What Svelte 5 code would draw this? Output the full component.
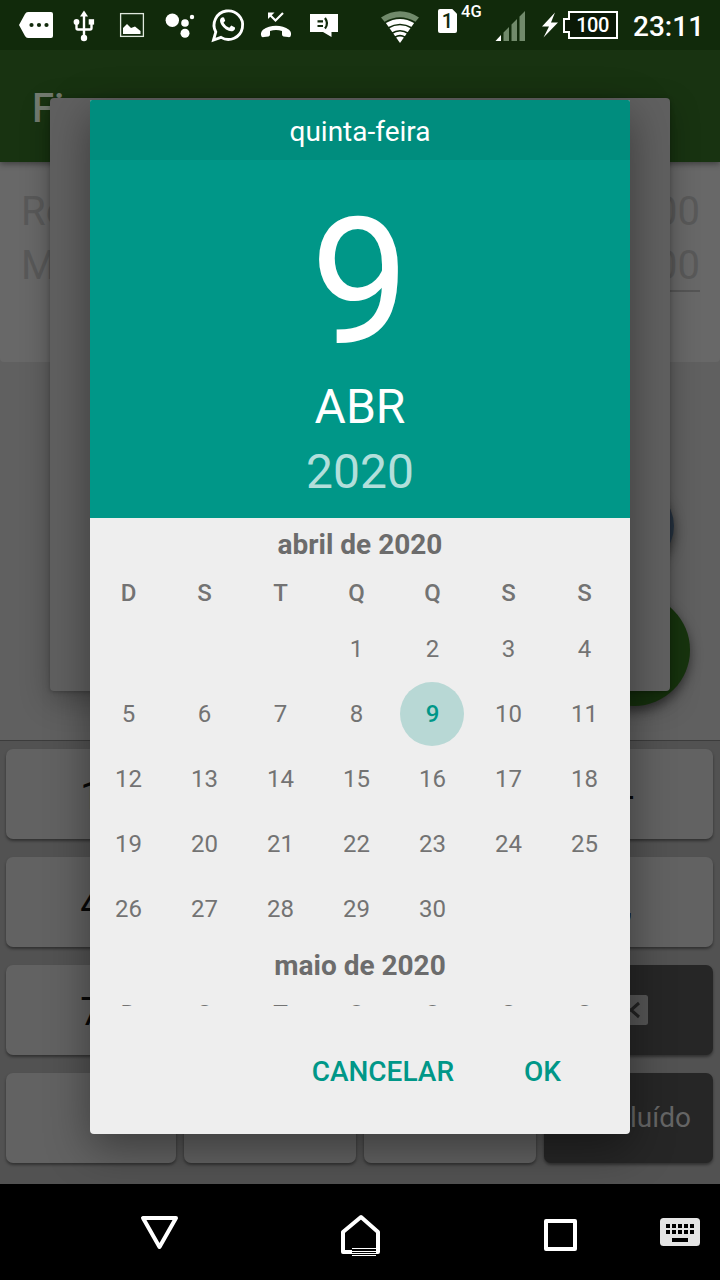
<script>
  const weekdays = ['D', 'S', 'T', 'Q', 'Q', 'S', 'S'];
  const days = [null, null, null, ...Array.from({ length: 30 }, (_, i) => i + 1)];
  const selected = 9;
  const keys = ['1', '', '', '-', '4', '', '', ',', '7', '', '', 'del', '', '', '', 'done'];
</script>

<div class="screen">
  <header class="status">
    <svg width="64" height="50" viewBox="0 0 64 50"><path d="M28 12H51Q53 12 53 14V36Q53 38 51 38H28Q26 38 25 36L19 25L25 14Q26 12 28 12Z" fill="#fff"/><g fill="#112a0b"><circle cx="31.500" cy="25" r="2.100"/><circle cx="39" cy="25" r="2.100"/><circle cx="46.500" cy="25" r="2.100"/></g></svg>
    <svg width="44" height="50" viewBox="64 0 44 50"><path d="M84 14V37M76.500 23V28Q76.500 29.500 78 29.500H90Q91.500 29.500 91.500 28V23" fill="none" stroke="#fff" stroke-width="2.400"/><g fill="#fff"><path d="M84 10.500L88 16.500H80Z"/><circle cx="76.500" cy="22" r="2.900"/><rect x="88.700" y="19.200" width="5.400" height="5.400"/><circle cx="84" cy="38" r="3.200"/></g></svg>
    <svg width="46" height="50" viewBox="108 0 46 50"><rect x="120.600" y="13.600" width="22.800" height="22.800" fill="none" stroke="#dfe8dd" stroke-width="1.300"/><path d="M123 34V28L127 24L131 28L135 26.500L140.500 31V34Z" fill="#fff"/></svg>
    <svg width="52" height="50" viewBox="154 0 52 50" fill="#fff"><circle cx="172.300" cy="20.300" r="6.700"/><circle cx="185" cy="23" r="3.800"/><circle cx="192" cy="17" r="2.200"/><circle cx="185" cy="33.200" r="4.500"/></svg>
    <svg width="44" height="50" viewBox="207 0 44 50"><path d="M214.500 40L216.800 32A14.300 14.300 0 1 1 222 37.400Z" fill="none" stroke="#fff" stroke-width="2.800"/><path d="M223.500 17.200Q221 17.800 221 21Q221.500 25.500 227 29.500Q231.500 32.300 234.500 30.800Q236.600 29.500 236 27.500L232.300 25.500L230.300 27.800Q226.500 26.500 224.500 22.800L226.200 20.800L225 17.500Z" fill="#fff"/></svg>
    <svg width="50" height="50" viewBox="250 0 50 50"><path d="M283 13L275.500 20.500L270 15" fill="none" stroke="#fff" stroke-width="2.200"/><path d="M268 12.500H274.500L268 19Z" fill="#fff"/><path d="M261.500 36.500C260.300 34 261 31.500 263 29.700C270 24.500 282 24.500 289 29.700C291.300 31.500 291.600 34 290.500 36.500Q289.500 37.500 288 37L283.500 36.500Q282 36 282 34.500V31Q276 29 270 31V34.500Q270 36 268.500 36.500L264 37Q262.300 37.500 261.500 36.500Z" fill="#fff"/></svg>
    <svg width="50" height="50" viewBox="300 0 50 50"><path d="M310 14H338V32H331.500V37L323 32H310Z" fill="#fff"/><path d="M317.500 21.300H323M317.500 26H323M325 18Q329 23.500 325 28.500" fill="none" stroke="#112a0b" stroke-width="2.200"/></svg>
    <svg width="84" height="50" viewBox="350 0 84 50"><path d="M381 17.500Q400 5 419 17.500L414.800 22.500Q400 13.500 385.200 22.500Z" fill="#718a6b"/><path d="M385.500 22.500Q400 13.500 414.500 22.500L400 43Z" fill="#fff"/><g fill="none" stroke="#112a0b" stroke-width="1.700"><path d="M385 22.500Q400 13.700 415 22.500M388 28Q400 21 412 28M391.500 33.500Q400 28 408.500 33.500M395 37.300Q400 34 405 37.300"/></g></svg>
    <div class="sim">1</div>
    <div class="lte">4G</div>
    <svg width="60" height="50" viewBox="484 0 60 50"><path d="M525 11V41H519.500V16.500ZM517 19V41H511.500V24.500ZM509 27V41H503.500V32.500Z" fill="#718a6b"/><path d="M501 35V41H495.500Z" fill="#fff"/></svg>
    <svg class="bolt" width="19" height="50" viewBox="541 0 19 50"><path d="M555 12.500L542 26.500H549L543.500 37.500L558 22.500H551Z" fill="#fff"/></svg>
    <div class="battery"><svg width="58" height="50" viewBox="561 0 58 50"><path d="M569 12H617V38H569V32H564V19H569Z" fill="#0a1806" stroke="#fff" stroke-width="2"/></svg><span>100</span></div>
    <time>23:11</time>
  </header>

  <div class="appbar"><span>Fi</span></div>

  <main>
    <section class="summary">
      <div class="line"><span>Re</span><span>00</span></div>
      <div class="line"><span>M</span><span class="field">00</span></div>
    </section>
    <i class="fab small"></i>
    <i class="fab"></i>
  </main>

  <div class="keyboard">
    {#each keys as key}
      <div class="key" class:dark={key === 'del' || key === 'done'}>
        {#if key === 'del'}
          <svg width="46" height="30" viewBox="0 0 46 30"><path d="M11 0H39.500Q42 0 42 2.500V27.500Q42 30 39.500 30H11L0 15Z" fill="#555"/><path d="M16 8L24 15L16 22M33 8L25 15L33 22" stroke="#222" stroke-width="3" fill="none"/></svg>
        {:else if key === 'done'}
          <span class="done">luído</span>
        {:else}{key}{/if}
      </div>
    {/each}
  </div>

  <nav>
    <svg width="720" height="96" viewBox="0 1184 720 96">
      <path d="M143 1218H176L159.500 1247Z" fill="none" stroke="#fff" stroke-width="4" stroke-linejoin="round"/>
      <path d="M343 1252V1232L361 1217L378 1232V1252Z" fill="none" stroke="#fff" stroke-width="4" stroke-linejoin="round"/>
      <path d="M352 1247H376V1256H352Z" fill="#000"/><path d="M352 1248.500H376M352 1251.500H376M352 1253.500H376M352 1255.500H376" stroke="#fff" stroke-width="1"/>
      <rect x="546" y="1221" width="29" height="28" fill="none" stroke="#fff" stroke-width="4" stroke-linejoin="round"/>
      <rect x="660" y="1218" width="40" height="28" rx="3.500" fill="#e4e4e4"/>
      <path d="M666 1226H694M666 1232H694" stroke="#000" stroke-width="4" stroke-dasharray="4 2"/><path d="M672 1240H688" stroke="#000" stroke-width="4"/>
    </svg>
  </nav>

  <div class="sheet"></div>
  <div class="picker">
    <div class="weekday">quinta-feira</div>
    <div class="date">
      <div class="day">9</div>
      <div class="month">ABR</div>
      <div class="year">2020</div>
    </div>
    <div class="months">
      <h2>abril de 2020</h2>
      <div class="week">{#each weekdays as d}<b>{d}</b>{/each}</div>
      <div class="grid">
        {#each days as d}<span class:selected={d === selected}>{d ?? ''}</span>{/each}
      </div>
      <h2>maio de 2020</h2>
      <div class="week">{#each weekdays as d}<b>{d}</b>{/each}</div>
    </div>
    <div class="actions"><span>CANCELAR</span><span>OK</span></div>
  </div>
</div>

<style>
  :global(body) { margin: 0; background: #000; }
  .screen { position: relative; width: 720px; height: 1280px; overflow: hidden; display: flex; flex-direction: column; font-family: Roboto, sans-serif; background: #606060; }
  .status { height: 50px; flex: none; display: flex; background: #112a0b; color: #fff; position: relative; z-index: 3; }
  .status svg { flex: none; display: block; }
  .sim { width: 19px; height: 24px; margin: 9px 0 0 4px; background: #fff; color: #112a0b; font: 500 20px/25px Roboto, sans-serif; text-align: center; clip-path: polygon(0 0, 75% 0, 100% 20%, 100% 100%, 0 100%); border-radius: 2px; }
  .lte { width: 27px; font: 500 16.5px/23px Roboto, sans-serif; padding-left: 4px; box-sizing: border-box; }
  .status .bolt { margin-left: -3px; }
  .battery { position: relative; width: 58px; margin-left: 1px; }
  .battery span { position: absolute; inset: 0 0 0 5px; text-align: center; font: 500 20px/51px Roboto, sans-serif; letter-spacing: -.5px; }
  time { font: 500 28px/54px Roboto, sans-serif; margin-left: 14px; letter-spacing: 0; }

  .appbar { height: 112px; flex: none; box-sizing: border-box; background: #183311; color: #737b70; font-size: 40px; font-weight: 500; line-height: 118px; padding-left: 32px; box-shadow: 0 2px 6px rgba(0, 0, 0, .4); z-index: 1; }
  main { height: 578px; flex: none; position: relative; background: #606060; }
  .summary { height: 200px; box-sizing: border-box; padding: 23px 20px 0 21px; background: #686868; border-radius: 0 0 4px 4px; }
  .line { display: flex; justify-content: space-between; height: 54px; line-height: 54px; font-size: 40px; font-weight: 400; color: #595959; }
  .field { border-bottom: 2px solid #555; height: 51px; }
  .fab { position: absolute; left: 578px; top: 432px; width: 112px; height: 112px; border-radius: 50%; background: #17340e; box-shadow: 0 5px 12px rgba(0, 0, 0, .5); }
  .fab.small { left: 594px; top: 324px; width: 80px; height: 80px; background: #273442; }

  .keyboard { height: 444px; flex: none; box-sizing: border-box; border-top: 1px solid #3c3c3c; background: #525252; padding: 8px 7px 21px 6px; display: grid; grid-template-columns: 170px 172px 172px 169px; grid-template-rows: repeat(4, 90px); column-gap: 8px; row-gap: 18px; }
  .key { background: #626262; border-radius: 7px; box-shadow: 0 2px 3px rgba(0, 0, 0, .4); display: flex; align-items: center; justify-content: center; font-size: 38px; color: #080808; box-sizing: border-box; padding-top: 3px; }
  .key.dark { background: #262626; padding-top: 0; }
  .done { color: #656565; font-size: 28px; margin-left: 64px; margin-top: -2px; }

  nav { height: 96px; flex: none; background: #000; position: relative; z-index: 3; }
  nav svg { display: block; }

  .sheet { position: absolute; left: 50px; top: 98px; width: 620px; height: 593px; border-radius: 4px; background: #606060; box-shadow: 0 10px 30px rgba(0, 0, 0, .28), 0 1px 4px rgba(0, 0, 0, .25); z-index: 1; }
  .picker { position: absolute; left: 90px; top: 100px; width: 540px; height: 1034px; display: flex; flex-direction: column; border-radius: 2px 2px 4px 4px; overflow: hidden; background: #eee; box-shadow: 0 14px 44px rgba(0, 0, 0, .4); z-index: 2; text-align: center; }
  .weekday { height: 60px; background: #008d7e; color: #fff; font-size: 28px; line-height: 64px; }
  .date { height: 358px; background: #009788; color: #fff; }
  .day { font-size: 176px; line-height: 180px; height: 216px; padding-top: 33px; box-sizing: border-box; }
  .month { font-size: 48px; line-height: 60px; padding-top: 1px; }
  .year { font-size: 48px; line-height: 60px; padding-top: 5px; color: #b2dfdb; }
  .months { height: 488px; overflow: hidden; color: #737373; }
  h2 { margin: 0; height: 53px; font-size: 28px; line-height: 53px; font-weight: 700; color: #6c6c6c; }
  .week { display: grid; grid-template-columns: repeat(7, 76px); height: 44px; }
  .week b { font-size: 24px; line-height: 45px; font-weight: 500; padding-left: 1px; }
  .grid { display: grid; grid-template-columns: repeat(7, 76px); grid-auto-rows: 65px; height: 324px; }
  .grid span { font-size: 24px; line-height: 64px; width: 64px; height: 64px; margin: 2px 6px 0; padding-left: 1px; box-sizing: border-box; }
  .grid .selected { background: #b8d8d5; color: #009788; border-radius: 50%; font-weight: 500; }
  .actions { height: 128px; display: flex; justify-content: flex-end; gap: 70px; padding-right: 69px; color: #009788; font-size: 28px; font-weight: 500; line-height: 132px; }
</style>
